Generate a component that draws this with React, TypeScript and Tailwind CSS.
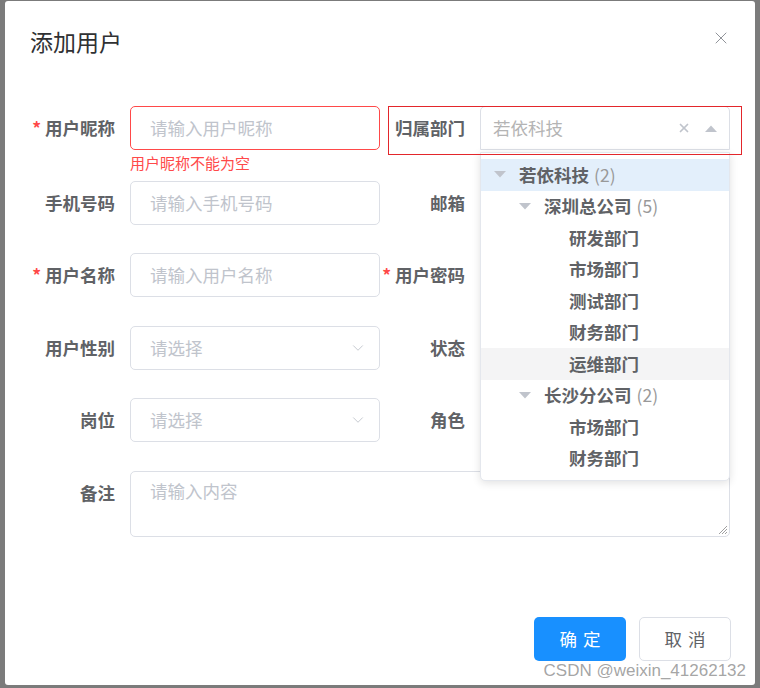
import { X, ChevronDown } from 'lucide-react'

const font = "font-['Microsoft_YaHei','Noto_Sans_CJK_SC',sans-serif]"

type TreeItem = { label: string; count?: number; level: number; arrow: boolean; bg?: string }

const tree: TreeItem[] = [
	{ label: '若依科技', count: 2, level: 0, arrow: true, bg: 'bg-[#e3effb]' },
	{ label: '深圳总公司', count: 5, level: 1, arrow: true },
	{ label: '研发部门', level: 2, arrow: false },
	{ label: '市场部门', level: 2, arrow: false },
	{ label: '测试部门', level: 2, arrow: false },
	{ label: '财务部门', level: 2, arrow: false },
	{ label: '运维部门', level: 2, arrow: false, bg: 'bg-[#f4f4f5]' },
	{ label: '长沙分公司', count: 2, level: 1, arrow: true },
	{ label: '市场部门', level: 2, arrow: false },
	{ label: '财务部门', level: 2, arrow: false },
]

const indent = ['pl-[13px]', 'pl-[38px]', 'pl-[63px]']

function Label({ text, required }: { text: string; required?: boolean }) {
	return (
		<div className="w-[100px] shrink-0 pr-[15px] text-right text-[17.5px] font-bold leading-[44px] text-[#606266]">
			{required && <span className="mr-[4px] text-[#ff4949]">*</span>}
			{text}
		</div>
	)
}

function Input({ placeholder, error }: { placeholder?: string; error?: boolean }) {
	return (
		<div
			className={`flex h-[44px] flex-1 items-center rounded-[5px] border px-[19px] text-[17.5px] text-[#c0c4cc] ${
				error ? 'border-[#ff4949]' : 'border-[#dcdfe6]'
			}`}
		>
			{placeholder}
		</div>
	)
}

function Select({ placeholder }: { placeholder?: string }) {
	return (
		<div className="flex h-[44px] flex-1 items-center justify-between rounded-[5px] border border-[#dcdfe6] pl-[19px] pr-[12px] text-[17.5px] text-[#c0c4cc]">
			<span>{placeholder}</span>
			<ChevronDown size={18} strokeWidth={1.2} className="text-[#c0c4cc]" />
		</div>
	)
}

function Caret() {
	return (
		<svg width="12" height="7" viewBox="0 0 12 7" className="shrink-0">
			<path d="M0 0 L12 0 L6 6.5 Z" fill="#c0c4cc" />
		</svg>
	)
}

function TreeDropdown() {
	return (
		<div className="absolute left-0 right-0 top-[46px] z-10 rounded-b-[5px] border border-[#e4e7ed] bg-white pb-[6px] pt-[6px] shadow-[0_2px_8px_rgba(0,0,0,0.12)]">
			{tree.map((item, i) => (
				<div
					key={i}
					className={`flex h-[31.5px] items-center ${indent[item.level]} ${item.bg ?? ''}`}
				>
					{item.arrow ? <Caret /> : <span className="w-[12px] shrink-0" />}
					<span className="ml-[13px] text-[17.5px] font-bold text-[#606266]">{item.label}</span>
					{item.count !== undefined && (
						<span className="ml-[5px] text-[17.5px] text-[#999999]">({item.count})</span>
					)}
				</div>
			))}
		</div>
	)
}

export default function App() {
	return (
		<div className={`relative h-[688px] w-[760px] overflow-hidden bg-[#7b7b7b] pl-[5px] pt-[1px] ${font}`}>
			<div className="relative h-[684px] w-[750px] rounded-[3px] bg-white">
				{/* header */}
				<div className="flex items-center justify-between pl-[25px] pr-[24px] pt-[24px]">
					<span className="text-[23px] leading-[32px] text-[#303133]">添加用户</span>
					<X size={20} strokeWidth={1.2} className="-mt-[7px] text-[#909399]" />
				</div>

				{/* form */}
				<div className="ml-[25px] mt-[49px] w-[700px]">
					<div className="flex">
						<div className="relative flex w-[350px]">
							<Label text="用户昵称" required />
							<Input placeholder="请输入用户昵称" error />
							<div className="absolute left-[100px] top-[47px] text-[15px] leading-[20px] text-[#ff4949]">
								用户昵称不能为空
							</div>
						</div>
						<div className="relative flex w-[350px]">
							<Label text="归属部门" />
							<div className="relative flex flex-1">
								<div className="flex h-[44px] flex-1 items-center justify-between rounded-t-[5px] border border-[#dcdfe6] pl-[12px] pr-[12px] text-[17.5px] text-[#b4b4b4]">
									<span>若依科技</span>
									<span className="flex items-center gap-[14px]">
										<X size={14} strokeWidth={3} className="text-[#c0c4cc]" />
										<svg width="12" height="7" viewBox="0 0 12 7">
											<path d="M0 7 L12 7 L6 0.5 Z" fill="#c0c4cc" />
										</svg>
									</span>
								</div>
								<TreeDropdown />
							</div>
							<div className="pointer-events-none absolute left-[8px] top-[0px] z-20 h-[49px] w-[354px] border border-[#e3262b]" />
						</div>
					</div>

					{/* right-column fields sit under the open tree dropdown */}
					<div className="mt-[31px] flex">
						<div className="flex w-[350px]">
							<Label text="手机号码" />
							<Input placeholder="请输入手机号码" />
						</div>
						<div className="flex w-[350px]">
							<Label text="邮箱" />
							<Input />
						</div>
					</div>

					<div className="mt-[28px] flex">
						<div className="flex w-[350px]">
							<Label text="用户名称" required />
							<Input placeholder="请输入用户名称" />
						</div>
						<div className="flex w-[350px]">
							<Label text="用户密码" required />
							<Input />
						</div>
					</div>

					<div className="mt-[29px] flex">
						<div className="flex w-[350px]">
							<Label text="用户性别" />
							<Select placeholder="请选择" />
						</div>
						<div className="flex w-[350px]">
							<Label text="状态" />
							<Select />
						</div>
					</div>

					<div className="mt-[28px] flex">
						<div className="flex w-[350px]">
							<Label text="岗位" />
							<Select placeholder="请选择" />
						</div>
						<div className="flex w-[350px]">
							<Label text="角色" />
							<Select />
						</div>
					</div>

					<div className="mt-[29px] flex">
						<Label text="备注" />
						<div className="relative h-[66px] flex-1 rounded-[5px] border border-[#dcdfe6] px-[19px] pt-[7px] text-[17.5px] leading-[24px] text-[#c0c4cc]">
							请输入内容
							<svg width="10" height="10" viewBox="0 0 10 10" className="absolute bottom-[1px] right-[1px]">
								<path d="M1 9 L9 1 M4 9 L9 4 M7 9 L9 7" stroke="#888" strokeWidth="0.8" />
							</svg>
						</div>
					</div>
				</div>

				{/* footer */}
				<div className="absolute bottom-[24px] right-[24px] flex gap-[13px]">
					<button className="h-[44px] w-[92px] rounded-[5px] bg-[#1890ff] pl-[6px] text-[17.5px] tracking-[6px] text-white">
						确定
					</button>
					<button className="h-[44px] w-[92px] rounded-[5px] border border-[#dcdfe6] bg-white pl-[6px] text-[17.5px] tracking-[6px] text-[#606266]">
						取消
					</button>
				</div>

				<div className="absolute bottom-[4px] right-[9px] font-['Liberation_Sans',sans-serif] text-[17px] leading-[20px] text-[#9a9a9a]/90">
					CSDN @weixin_41262132
				</div>
			</div>
		</div>
	)
}
